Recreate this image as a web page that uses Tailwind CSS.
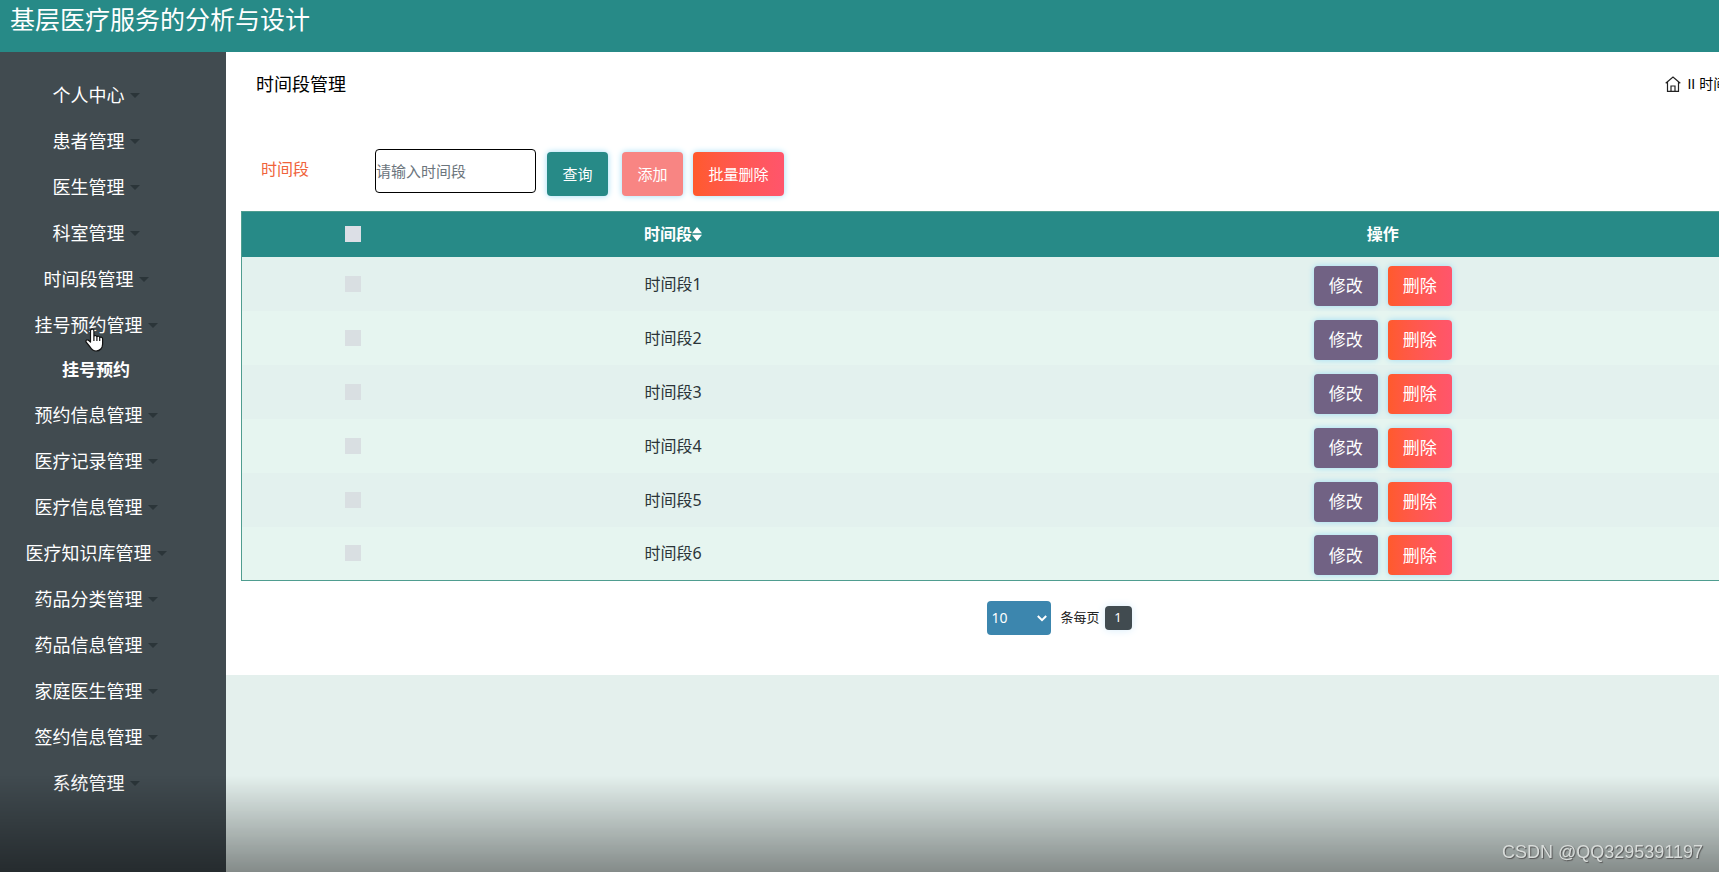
<!DOCTYPE html>
<html lang="zh-CN">
<head>
<meta charset="utf-8">
<title>时间段管理</title>
<script src="https://cdn.jsdelivr.net/npm/@tailwindcss/browser@4"></script>
</head>
<body class="min-h-screen flex flex-col overflow-hidden bg-[#e4f0ed] font-['Noto_Sans','Noto_Sans_CJK_SC',sans-serif] text-[#2b3438]">
<header class="h-13 bg-[#278a87] px-2.5">
  <h1 class="text-[25px] leading-[38px] text-white">基层医疗服务的分析与设计</h1>
</header>
<div class="flex flex-1">
  <nav class="w-[226px] shrink-0 bg-[#414b50] pt-5 pr-[34px] text-lg text-white">
    <ul id="menu"></ul>
  </nav>
  <div class="min-w-0 flex-1 overflow-hidden">
    <main class="w-[112%] bg-white px-[15px] pb-10">
      <div class="flex items-center justify-between pt-4 pr-[114px] pl-[15px] leading-8 text-black">
        <h2 class="text-lg leading-8">时间段管理</h2>
        <a href="#" class="flex items-center gap-1.5 text-sm">
          <svg class="size-4" viewBox="0 0 16 16" fill="none" stroke="#222" stroke-width="1.2"><path d="M.7 7.3 8 1l7.3 6.3M2.5 6v9.3h11V6M6 15.300V10h4v5.300"/></svg>
          <span class="font-['Liberation_Sans','Noto_Sans_CJK_SC',sans-serif]">II 时间段管理</span>
        </a>
      </div>
      <form class="flex items-start pt-[49px] pl-5" onsubmit="return false">
        <label for="slot" class="w-[114px] pt-1.5 text-base leading-7 text-[#f0633a]">时间段</label>
        <input id="slot" type="text" placeholder="请输入时间段" class="h-11 w-[161px] rounded border border-black bg-white text-[15px] placeholder:text-[#6c757d]">
        <div class="ml-[11px] flex pt-[3px] text-[15px] text-white">
          <button class="h-11 w-[61px] rounded bg-[#278a87] shadow-[0_0_6px_#9ddcf5]">查询</button>
          <button class="ml-3.5 h-11 w-[61px] rounded bg-[#f88583] shadow-[0_0_6px_#9ddcf5]">添加</button>
          <button class="ml-2.5 h-11 w-[91px] rounded bg-linear-to-r from-[#ff5a2c] to-[#ff556c] shadow-[0_0_6px_#9ddcf5]">批量删除</button>
        </div>
      </form>
      <table class="mt-[15px] w-full table-fixed border-collapse border border-[#4f9d90] text-center">
        <thead class="bg-[#278a87] text-white">
          <tr class="h-[45px]">
            <th class="w-[13.5%]"><input type="checkbox" aria-label="全选" class="block mx-auto size-4 appearance-none bg-[#dcdfe6]"></th>
            <th class="w-[25.6%] text-base font-bold"><span class="inline-flex items-center">时间段<svg class="w-2.5 h-3.5" viewBox="0 0 10 14" fill="#fff"><path d="M0 6.200 5 0l5 6.200zM0 7.800h10L5 14z"/></svg></span></th>
            <th class="text-base font-bold">操作</th>
          </tr>
        </thead>
        <tbody id="rows"></tbody>
      </table>
      <div class="mt-5 flex items-center justify-center pr-1.5 text-[13px]">
        <div class="relative">
          <select aria-label="每页条数" class="block h-[34px] w-16 appearance-none rounded bg-[#3c86ae] px-[5px] text-sm text-white"><option>10</option><option>20</option></select>
          <svg class="pointer-events-none absolute top-3.5 right-1 h-[7px] w-2.5" viewBox="0 0 10 7" fill="none" stroke="#fff" stroke-width="2"><path d="m.8 1 4.200 4.200L9.200 1"/></svg>
        </div>
        <span class="ml-2.5 text-[#222]">条每页</span>
        <button class="ml-[5px] h-6 w-[27px] rounded bg-[#414b50] text-white shadow-[0_0_8px_#d5ebfa]">1</button>
      </div>
    </main>
  </div>
</div>
<div class="pointer-events-none fixed inset-x-0 bottom-0 h-24 bg-linear-to-b from-transparent to-black/42"></div>
<p class="fixed right-4 bottom-1.5 font-['Liberation_Sans',sans-serif] text-lg leading-7 text-[#d8dcda] [text-shadow:1px_1px_1px_#555]">CSDN @QQ3295391197</p>
<svg class="pointer-events-none fixed top-[328px] left-[85px] h-6 w-[19px]" viewBox="0 0 19 24" fill="#fff" stroke="#111" stroke-width="1.200" stroke-linejoin="round"><path d="M5.500 14V3c0-2.600 3.400-2.600 3.400 0v5.500c.6-1.500 2.800-1.200 3 .4.800-1.200 2.700-.7 2.800.7 1-1 2.900-.3 2.900 1.300V16c0 4-2.600 7-6.500 7-3 0-4.500-1.500-6-4L1.200 14.200c-1-2 1.300-3.200 2.600-1.700zM8.900 8.500V13M11.900 9v4M14.700 9.800V13"/></svg>
<script>
const menu = ['个人中心','患者管理','医生管理','科室管理','时间段管理','挂号预约管理','预约信息管理','医疗记录管理','医疗信息管理','医疗知识库管理','药品分类管理','药品信息管理','家庭医生管理','签约信息管理','系统管理'];
document.getElementById('menu').innerHTML = menu.map(name => `
  <li><a href="#" class="flex h-[46px] items-center justify-center gap-[5px]">${name}<span class="border-x-[5px] border-t-[5px] border-x-transparent border-t-[#2b3539]"></span></a>
  ${name === '挂号预约管理' ? '<a href="#" class="flex h-11 items-center justify-center text-[17px] font-bold">挂号预约</a>' : ''}</li>`).join('');
document.getElementById('rows').innerHTML = [1,2,3,4,5,6].map(n => `
  <tr class="h-[54px] odd:bg-[#e3f1ee] even:bg-[#e6f5f0]">
    <td><input type="checkbox" aria-label="选择时间段${n}" class="mx-auto block size-4 appearance-none bg-[#d9dfe2]"></td>
    <td class="text-base">时间段${n}</td>
    <td class="pt-1 text-[17px] text-white"><div class="flex justify-center gap-2.5">
      <button class="h-10 w-16 rounded bg-[#716284] shadow-[0_0_6px_#9ddcf5]">修改</button>
      <button class="h-10 w-16 rounded bg-linear-to-r from-[#ff5a2c] to-[#ff556c] shadow-[0_0_6px_#9ddcf5]">删除</button></div></td>
  </tr>`).join('');
</script>
</body>
</html>
